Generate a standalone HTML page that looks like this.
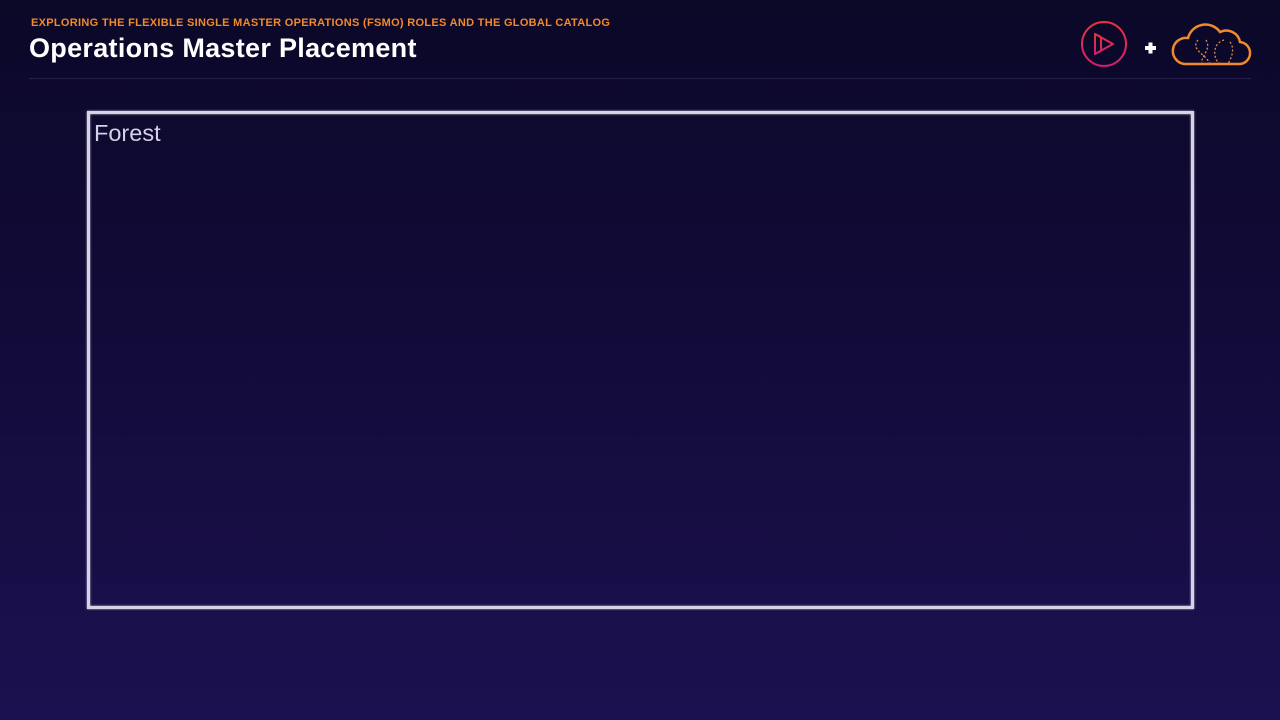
<!DOCTYPE html>
<html><head><style>
html,body{margin:0;padding:0}
body{width:1280px;height:720px;overflow:hidden;background:linear-gradient(#0b0828 0%,#130b3a 50%,#1c1150 100%);font-family:"Liberation Sans",sans-serif;position:relative}
.sub{position:absolute;left:31px;top:17px;color:#f08a2c;font-size:11px;font-weight:bold;letter-spacing:0.3px}
.title{position:absolute;left:29px;top:33px;color:#fff;font-size:27px;font-weight:bold;letter-spacing:0.3px}
.rule{position:absolute;left:29px;top:78px;width:1222px;height:1px;background:#25204a}
.box{position:absolute;left:87px;top:111px;width:1101px;height:492px;border:3px solid #d6d3e4;box-shadow:0 0 2px #c8c4dc, inset 0 0 2px #c8c4dc}
.lbl{position:absolute;left:94px;top:120px;color:#d4d0ea;font-size:23.5px}
</style></head><body>
<div class="sub">EXPLORING THE FLEXIBLE SINGLE MASTER OPERATIONS (FSMO) ROLES AND THE GLOBAL CATALOG</div>
<div class="title">Operations Master Placement</div>
<div class="rule"></div>
<svg style="position:absolute;left:1080px;top:20px" width="180" height="50">
<defs><linearGradient id="g" x1="0" y1="0" x2="0" y2="1"><stop offset="0" stop-color="#e8343c"/><stop offset="1" stop-color="#d0206a"/></linearGradient></defs>
<circle cx="24" cy="24" r="22" fill="none" stroke="url(#g)" stroke-width="2"/>
<path d="M15 14 V34 L33 24 Z M21 17 V31 M15 14 L21 17 M15 34 L21 31" fill="none" stroke="url(#g)" stroke-width="2" stroke-linejoin="round"/>
<path d="M65 28 H76 M70.5 22.5 V33.5" stroke="#fff" stroke-width="4"/>
<path d="M104 44 H158 A11 11 0 0 0 160 22 A14 14 0 0 0 140 12 A18 18 0 0 0 108 18 A13 13 0 0 0 104 44 Z" fill="none" stroke="#f08a2c" stroke-width="2.5"/>
<path d="M118 20 C110 30 126 34 130 44 M126 20 C132 30 120 36 122 44 M144 20 C130 24 134 44 142 44 M150 22 C156 30 150 40 148 44" fill="none" stroke="#e08a4c" stroke-width="1.3" stroke-dasharray="2 2"/>
</svg>
<div class="box"></div>
<div class="lbl">Forest</div>
</body></html>
